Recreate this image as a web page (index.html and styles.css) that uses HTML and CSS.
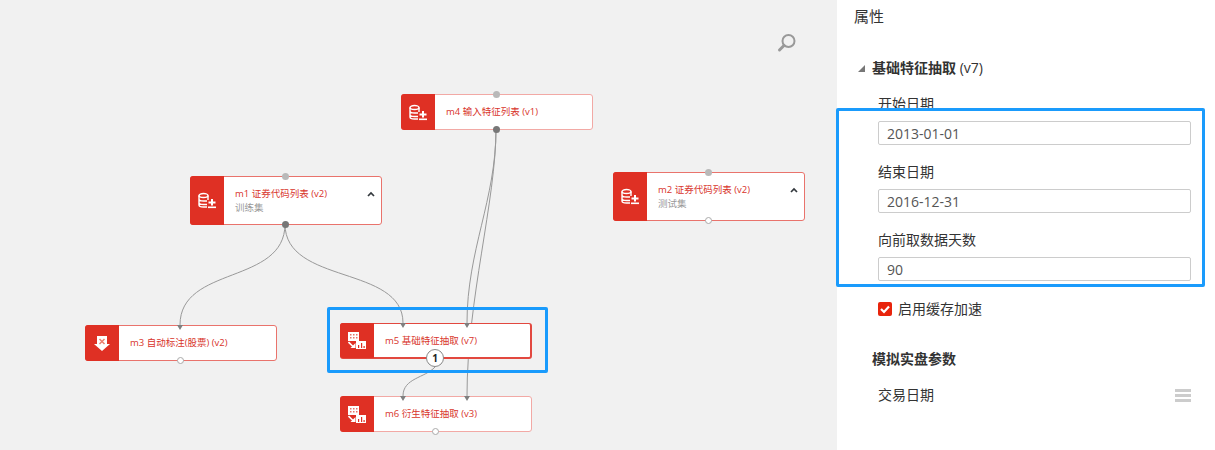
FILE: index.html
```html
<!DOCTYPE html>
<html lang="en">
<head>
    <meta charset="UTF-8">
    <title>基础特征抽取</title>
    <link rel="stylesheet" href="styles.css">
</head>
<body>
    <svg class="icon-defs" width="0" height="0">
        <symbol id="icon-db" viewBox="0 0 18 16">
            <ellipse cx="5.5" cy="3" rx="4.5" ry="2" fill="none" stroke="#fff" stroke-width="1.4"/>
            <path d="M1 3v9.5c0 1.2 2 2 4.5 2H9M10 3v4.5M1 6.5c0 1.2 2 2 4.5 2H9M1 10c0 1.2 2 2 4.5 2H9" fill="none" stroke="#fff" stroke-width="1.4"/>
            <path d="M13 6.5h2v2.500h2.500v2H15v2h-2v-2h-2.500v-2H13z" fill="#fff"/>
            <rect x="10" y="14" width="8" height="1.600" fill="#fff"/>
        </symbol>
        <symbol id="icon-feature" viewBox="0 0 18 17">
            <rect x="0" y="0" width="11" height="9" fill="#fff"/>
            <path d="M2 2h1.500v1.500H2zM5 2h1.500v1.500H5zM8 2h1.500v1.500H8zM2 5h1.500v1.500H2zM5 5h1.500v1.500H5zM8 5h1.500v1.500H8z" fill="#e8736a"/>
            <path d="M0.500 10l4.500 4.500" stroke="#fff" stroke-width="1.600"/>
            <path d="M2.500 16h5v-5z" fill="#fff"/>
            <rect x="8" y="9" width="10" height="8" fill="#fff"/>
            <path d="M10 13h1.200v3H10zM13 11h1.200v5H13zM15.500 14h1.200v2h-1.200z" fill="#df3024"/>
        </symbol>
        <symbol id="icon-mark" viewBox="0 0 16 15">
            <path d="M3 0h10v8h3l-8 7-8-7h3z" fill="#fff"/>
            <path d="M5.500 3l5 5M10.500 3l-5 5" stroke="#ec7f6f" stroke-width="1.500"/>
        </symbol>
        <symbol id="icon-chevron" viewBox="0 0 8 6">
            <path d="M1 5l3-3 3 3" fill="none" stroke="#33383d" stroke-width="1.700"/>
        </symbol>
    </svg>

    <div class="app">
        <main class="canvas">
            <svg class="edges" width="837" height="450">
                <path d="M285 224C285 285 180 265 180 325"/>
                <path d="M285 224C285 285 403 265 403 323"/>
                <path d="M496 129C496 200 467 250 467 323"/>
                <path d="M496 129C496 200 467 300 467 396"/>
                <path d="M435 367C425 378 403 378 403 396"/>
            </svg>

            <svg class="zoom-icon" width="20" height="20" viewBox="0 0 20 20">
                <circle cx="11.500" cy="8" r="6" fill="none" stroke="#999" stroke-width="2"/>
                <path d="M7 12.500L2.500 17" stroke="#999" stroke-width="3" stroke-linecap="round"/>
            </svg>

            <div class="node node-m4 node-faint">
                <div class="node-icon"><svg class="glyph"><use href="#icon-db"/></svg></div>
                <div class="node-text"><div class="node-title">m4 输入特征列表 (v1)</div></div>
                <span class="port port-in"></span>
                <span class="port port-out"></span>
            </div>

            <div class="node node-m1 node-tall">
                <div class="node-icon"><svg class="glyph"><use href="#icon-db"/></svg></div>
                <div class="node-text">
                    <div class="node-title">m1 证券代码列表 (v2)</div>
                    <div class="node-sub">训练集</div>
                </div>
                <svg class="chevron"><use href="#icon-chevron"/></svg>
                <span class="port port-in"></span>
                <span class="port port-out"></span>
            </div>

            <div class="node node-m2 node-tall">
                <div class="node-icon"><svg class="glyph"><use href="#icon-db"/></svg></div>
                <div class="node-text">
                    <div class="node-title">m2 证券代码列表 (v2)</div>
                    <div class="node-sub">测试集</div>
                </div>
                <svg class="chevron"><use href="#icon-chevron"/></svg>
                <span class="port port-in"></span>
                <span class="port port-empty"></span>
            </div>

            <div class="node node-m3">
                <div class="node-icon"><svg class="glyph glyph-mark"><use href="#icon-mark"/></svg></div>
                <div class="node-text"><div class="node-title">m3 自动标注(股票) (v2)</div></div>
                <span class="port port-empty"></span>
            </div>

            <div class="node node-m5 node-selected">
                <div class="node-icon"><svg class="glyph"><use href="#icon-feature"/></svg></div>
                <div class="node-text"><div class="node-title">m5 基础特征抽取 (v7)</div></div>
                <span class="badge">1</span>
            </div>

            <div class="node node-m6 node-faint">
                <div class="node-icon"><svg class="glyph"><use href="#icon-feature"/></svg></div>
                <div class="node-text"><div class="node-title">m6 衍生特征抽取 (v3)</div></div>
                <span class="port port-empty"></span>
            </div>

            <!-- input arrows sit over the node borders -->
            <svg class="arrows" width="837" height="450">
                <path d="M177 325h6l-3 5zM400 323h6l-3 5zM464 323h6l-3 5zM400 396h6l-3 5zM464 396h6l-3 5z"/>
            </svg>

            <div class="highlight highlight-node"></div>
        </main>

        <aside class="panel">
            <h2 class="panel-title">属性</h2>
            <h3 class="section-title section-open">基础特征抽取 <span class="section-version">(v7)</span></h3>

            <div class="field">
                <label class="field-label">开始日期</label>
                <input class="field-input" type="text" value="2013-01-01">
            </div>
            <div class="field">
                <label class="field-label">结束日期</label>
                <input class="field-input" type="text" value="2016-12-31">
            </div>
            <div class="field">
                <label class="field-label">向前取数据天数</label>
                <input class="field-input" type="text" value="90">
            </div>

            <div class="check-row">
                <span class="checkbox">
                    <svg width="14" height="14" viewBox="0 0 14 14"><path d="M3 7l3 3 5-5.500" fill="none" stroke="#fff" stroke-width="2.200"/></svg>
                </span>
                <span>启用缓存加速</span>
            </div>

            <h3 class="section-title section-second">模拟实盘参数</h3>

            <div class="list-row">
                <span>交易日期</span>
                <span class="menu-bars"><i></i><i></i><i></i></span>
            </div>

            <div class="highlight highlight-fields"></div>
        </aside>
    </div>
</body>
</html>
```

FILE: styles.css
```css
html, body {
    margin: 0;
    padding: 0;
    height: 450px;
    overflow: hidden;
    font-family: 'Open Sans', 'Noto Sans CJK SC', sans-serif;
    color: #333;
    background-color: #fff;
}

.icon-defs {
    position: absolute;
}

.app {
    display: flex;
    height: 450px;
}

/* Canvas */
.canvas {
    position: relative;
    width: 837px;
    flex-shrink: 0;
    background-color: #f1f1f1;
    overflow: hidden;
}

.edges, .arrows {
    position: absolute;
    left: 0;
    top: 0;
}

.edges path {
    fill: none;
    stroke: #999;
    stroke-width: 1;
}

.arrows path {
    fill: #808080;
}

.zoom-icon {
    position: absolute;
    left: 777px;
    top: 33px;
}

.node {
    position: absolute;
    display: flex;
    box-sizing: border-box;
    width: 192px;
    height: 36px;
    background-color: #fff;
    border: 1px solid #e9736c;
    border-radius: 3px;
}

.node-tall {
    height: 49px;
}

.node-faint {
    border-color: #f2a9a5;
}

.node-selected {
    border-color: #e2483f;
    border-width: 1px 2px 2px 1px;
}

.node-m1 { left: 190px; top: 176px; }
.node-m2 { left: 613px; top: 172px; }
.node-m3 { left: 85px; top: 325px; }
.node-m4 { left: 401px; top: 94px; }
.node-m5 { left: 340px; top: 323px; }
.node-m6 { left: 340px; top: 396px; }

.node-icon {
    display: flex;
    align-items: center;
    justify-content: center;
    width: 34px;
    margin: -1px 0 -1px -1px;
    background-color: #df3024;
    border-radius: 3px 0 0 3px;
    flex-shrink: 0;
}

.glyph {
    width: 18px;
    height: 17px;
}

.glyph-mark {
    width: 16px;
    height: 15px;
}

.node-text {
    display: flex;
    flex-direction: column;
    justify-content: center;
    padding-left: 11px;
    font-size: 9.5px;
    line-height: 13.5px;
}

.node-title {
    color: #d8342b;
    white-space: nowrap;
}

.node-sub {
    color: #999;
}

.chevron {
    position: absolute;
    right: 6px;
    top: 14px;
    width: 8px;
    height: 6px;
}

.port {
    position: absolute;
    left: 50%;
    width: 7px;
    height: 7px;
    margin-left: -4.5px;
    border-radius: 50%;
}

.port-in {
    top: -4px;
    background-color: #b9b9b9;
}

.port-out {
    bottom: -4px;
    background-color: #777;
}

.port-empty {
    bottom: -4px;
    box-sizing: border-box;
    background-color: #fff;
    border: 1px solid #aaa;
}

.badge {
    position: absolute;
    left: 85px;
    top: 25px;
    box-sizing: border-box;
    width: 18px;
    height: 18px;
    background-color: #fff;
    border: 1px solid #888;
    border-radius: 50%;
    font-size: 10px;
    font-weight: 700;
    line-height: 16px;
    text-align: center;
    color: #222;
}

.highlight {
    position: absolute;
    box-sizing: border-box;
    border: 3px solid #1a9bfc;
    border-radius: 2px;
    pointer-events: none;
}

.highlight-node {
    left: 327px;
    top: 307px;
    width: 221px;
    height: 66px;
}

.highlight-fields {
    left: -1px;
    top: 108px;
    width: 369px;
    height: 179px;
}

/* Properties panel */
.panel {
    position: relative;
    flex: 1;
    box-sizing: border-box;
    padding: 6px 24px 0 17px;
    font-size: 14px;
    z-index: 1;
}

.panel-title {
    margin: 0;
    font-size: 15px;
    font-weight: 400;
    line-height: 20px;
}

.section-title {
    margin: 0;
    padding-left: 18px;
    font-size: 14px;
    font-weight: 600;
    line-height: 20px;
}

.section-version {
    font-weight: 400;
}

.section-open {
    position: relative;
    margin-top: 32px;
    margin-bottom: 16px;
}

.section-open::before {
    content: '';
    position: absolute;
    left: 4px;
    top: 7px;
    width: 0;
    height: 0;
    border-left: 7px solid transparent;
    border-bottom: 7px solid #777;
}

.section-second {
    margin-top: 30px;
}

.field {
    padding-left: 24px;
    margin-bottom: 17px;
}

.field-label {
    display: block;
    line-height: 20px;
    margin-bottom: 7px;
}

.field-input {
    display: block;
    box-sizing: border-box;
    width: 313px;
    height: 24px;
    padding: 0 8px;
    border: 1px solid #ccc;
    border-radius: 2px;
    font-family: inherit;
    font-size: 14px;
    color: #555;
    background-color: #fff;
}

.check-row {
    display: flex;
    align-items: center;
    gap: 6px;
    padding-left: 24px;
    margin-top: 18px;
    line-height: 20px;
}

.checkbox {
    display: block;
    width: 14px;
    height: 14px;
    background-color: #e8240c;
    border-radius: 2px;
}

.checkbox svg {
    display: block;
}

.list-row {
    display: flex;
    align-items: center;
    justify-content: space-between;
    width: 313px;
    margin: 16px 0 0 24px;
    line-height: 20px;
}

.menu-bars {
    display: flex;
    flex-direction: column;
    gap: 2px;
}

.menu-bars i {
    display: block;
    width: 16px;
    height: 3px;
    background-color: #ccc;
}
```
